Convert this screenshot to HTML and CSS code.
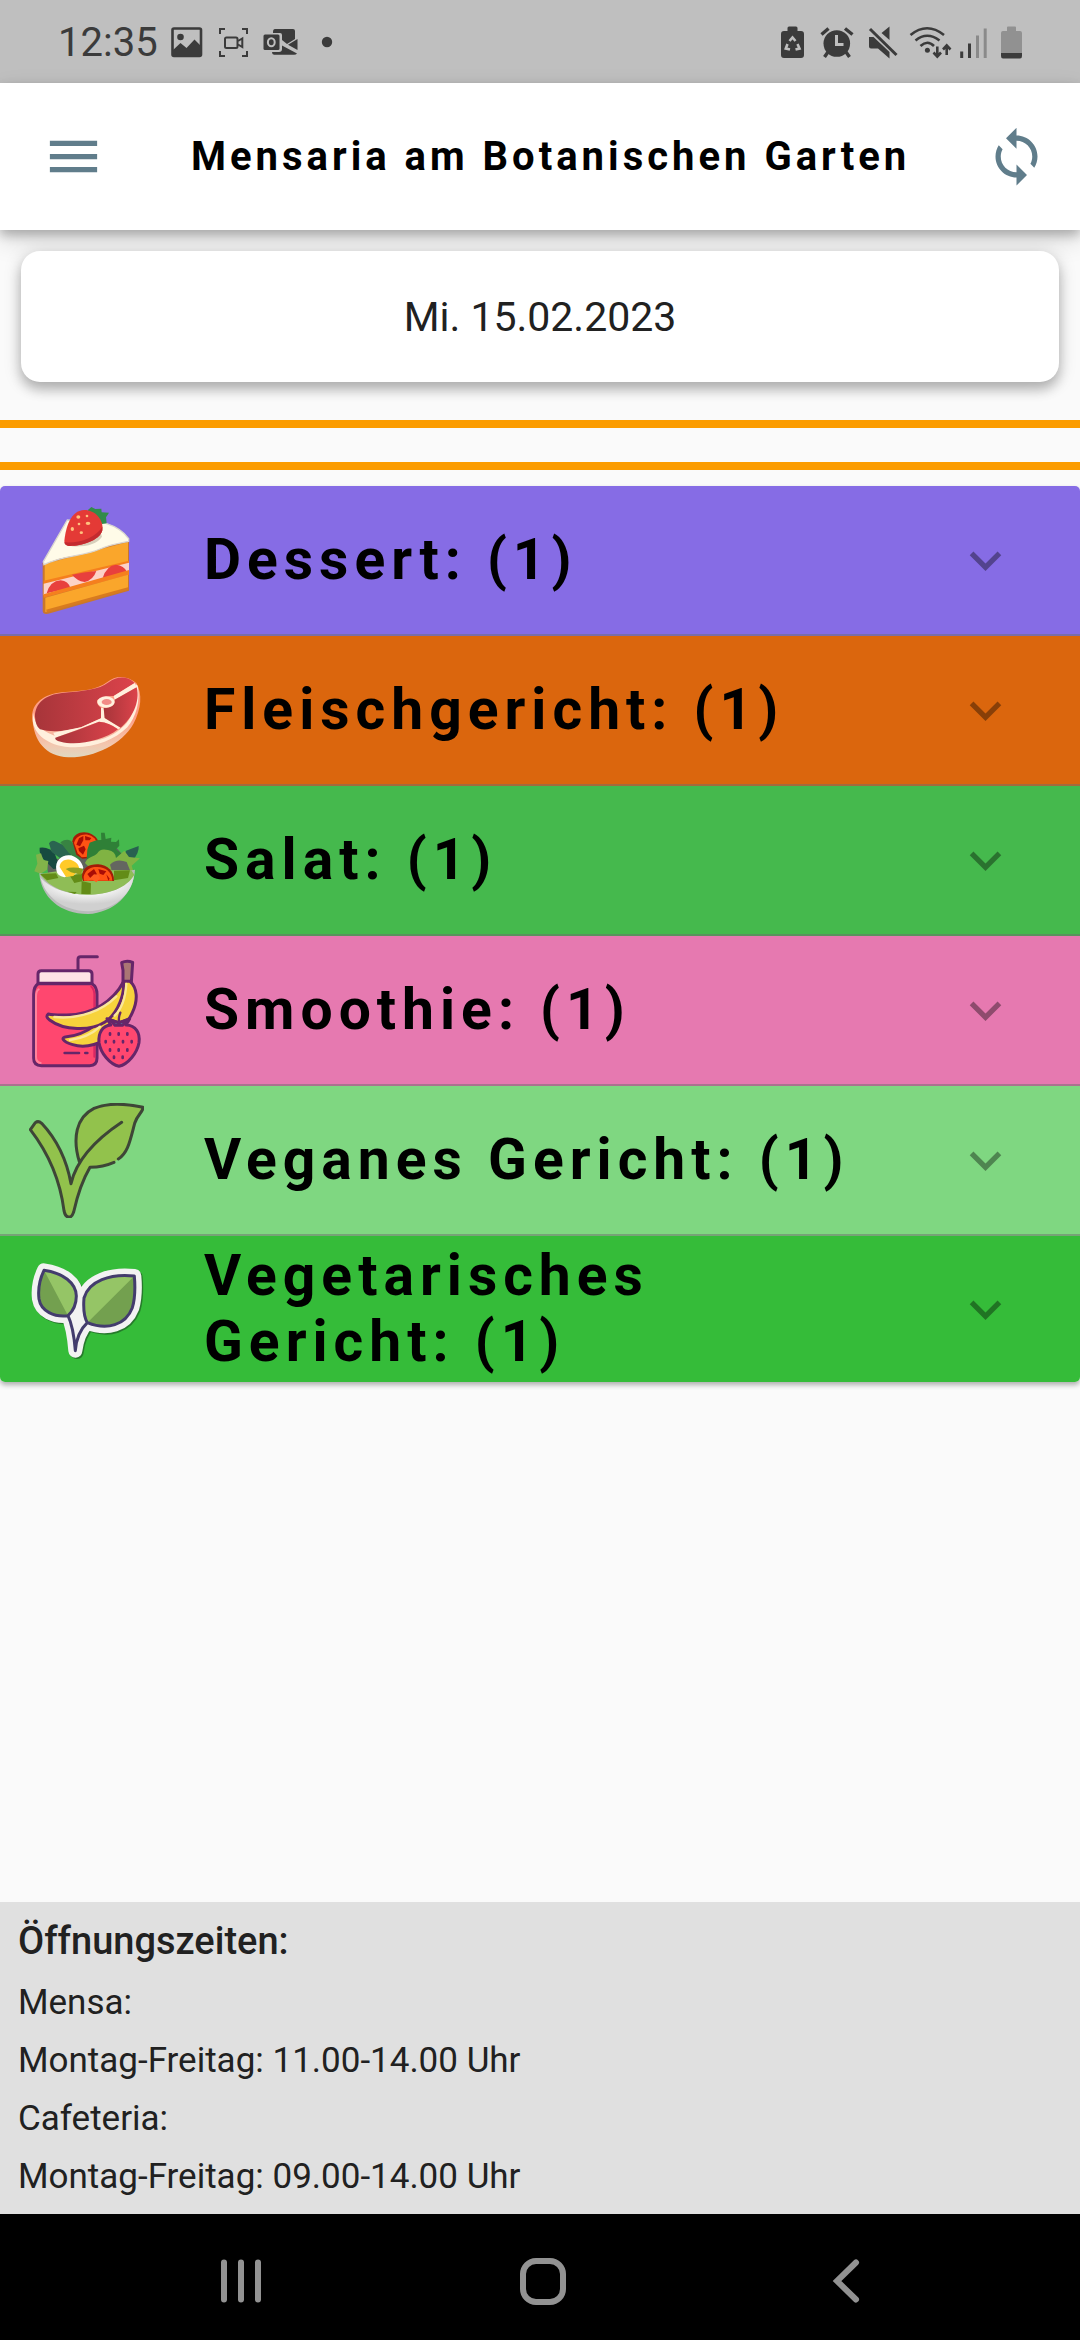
FILE: index.html
```html
<!DOCTYPE html>
<html lang="de">
<head>
<meta charset="utf-8">
<meta name="viewport" content="width=device-width, initial-scale=1">
<title>Mensaria am Botanischen Garten</title>
<link rel="stylesheet" href="styles.css">
</head>
<body>
<div class="status-bar">
  <div class="status-left">
    <span class="clock">12:35</span>
    <svg width="33" height="42" viewBox="170 20 33 42" aria-hidden="true">
      <rect x="172.500" y="27.500" width="28.500" height="27.500" rx="1.500" fill="none" stroke="#3b3b3b" stroke-width="2.600"/>
      <circle cx="180.500" cy="36" r="3.300" fill="#3b3b3b"/>
      <path d="M172 50L180.500 42L186.500 47L194.500 38.500L201 45V55H172Z" fill="#3b3b3b"/>
    </svg>
    <svg width="36" height="42" viewBox="215 20 36 42" fill="none" stroke="#3b3b3b" stroke-width="2" aria-hidden="true">
      <path d="M220 33V28H225M242 28H247V33M247 50V55H242M225 55H220V50"/>
      <rect x="225" y="36.500" width="12.500" height="10.500" rx="1.500"/>
      <path d="M238 40L242.300 37.500V46L238 43.500"/>
    </svg>
    <svg width="36" height="42" viewBox="263 20 36 42" aria-hidden="true">
      <path d="M273 31Q273 28 275 28H293Q295 28 295 30V38L287 43L282 39V34Q282 32 280 32H273Z" fill="#3b3b3b"/>
      <path d="M297.500 38V49L288 43.700ZM272 51H279Q282 51 282 48V44.500L297 52.500Q296 53.700 294 53.700H274Q272 53.700 272 51Z" fill="#3b3b3b"/>
      <rect x="263.500" y="33.500" width="16" height="15.500" rx="1.500" fill="#3b3b3b"/>
      <ellipse cx="271.300" cy="41.200" rx="3.400" ry="4" fill="none" stroke="#bfbfbf" stroke-width="2"/>
    </svg>
    <svg width="32" height="42" viewBox="311 20 32 42" aria-hidden="true"><circle cx="327" cy="41" r="5.200" fill="#3b3b3b"/></svg>
  </div>
  <div class="status-right">
    <svg width="34" height="42" viewBox="776 20 34 42" aria-hidden="true">
      <path d="M787.500 30V27Q787.500 25.500 789 25.500H796Q797.500 25.500 797.500 27V30H801Q804 30 804 33V54Q804 57 801 57H784Q781 57 781 54V33Q781 30 784 30Z" fill="#3b3b3b"/>
      <path d="M789.500 40L792.500 36.500L795.500 40M797.500 43L799.500 47.500L795.500 48.500M790 48.500L785.800 47.500L787.500 43" fill="none" stroke="#bfbfbf" stroke-width="2.600"/>
      <path d="M792.500 40L796.500 44L793.500 43.500V48.500H791.500V43.500L788.500 44Z" fill="#3b3b3b"/>
    </svg>
    <svg width="38" height="42" viewBox="818 20 38 42" fill="none" stroke="#3b3b3b" aria-hidden="true">
      <circle cx="836.800" cy="42.500" r="13.300" fill="#3b3b3b" stroke="none"/>
      <path d="M821.500 33.500L828.500 27.500M845 27.500L852.500 33.500M828 51L824.500 56M846 51L849.500 56" stroke-width="3.400"/>
      <path d="M836.500 34V43.500H843.500" stroke="#bfbfbf" stroke-width="3"/>
    </svg>
    <svg width="36" height="42" viewBox="864 20 36 42" aria-hidden="true">
      <path d="M869 36H873.500L889.500 51V57.500L878 47.500H871Q869 47.500 869 45.500ZM881.500 32L889.500 25.500V39Z" fill="#3b3b3b"/>
      <path d="M870 28L896.500 54" stroke="#3b3b3b" stroke-width="3"/>
    </svg>
    <svg width="44" height="42" viewBox="908 20 44 42" fill="none" stroke="#3b3b3b" stroke-width="2.600" aria-hidden="true">
      <path d="M910.500 34Q927 20.500 944 34M915.500 39.500Q927 30 939.500 39.500M920.500 45Q927.500 38.500 934 45"/>
      <circle cx="927.400" cy="49.300" r="2.500" fill="#3b3b3b" stroke="none"/>
      <path d="M937.300 45.500V55M933.500 51.500L937.300 55.500L941 51.500M946.700 54V45M943 48.500L946.700 44.500L950.500 48.500"/>
    </svg>
    <svg width="28" height="42" viewBox="960 20 28 42" stroke-width="3" aria-hidden="true">
      <path d="M961.700 50.500V57M969.500 42.500V57" stroke="#3b3b3b"/>
      <path d="M977.500 34.500V57M985.200 27.500V57" stroke="#8a8a8a"/>
    </svg>
    <svg width="30" height="42" viewBox="996 20 30 42" aria-hidden="true">
      <path d="M1007 30V26.500Q1007 25.500 1008 25.500H1015Q1016 25.500 1016 26.500V30H1020Q1022 30 1022 32V52H1001V32Q1001 30 1003 30Z" fill="#919191"/>
      <path d="M1001 52H1022V55Q1022 57.500 1020 57.500H1003Q1001 57.500 1001 55Z" fill="#3b3b3b"/>
    </svg>
  </div>
</div>

<header class="app-bar">
  <button class="icon-button" type="button" aria-label="Menü">
    <svg viewBox="0 0 24 24"><path d="M3 18h18v-2H3v2zm0-5h18v-2H3v2zm0-7v2h18V6H3z"/></svg>
  </button>
  <h1 class="app-title">Mensaria am Botanischen Garten</h1>
  <button class="icon-button" type="button" aria-label="Aktualisieren">
    <svg viewBox="0 0 24 24"><path d="M12 4V1L8 5l4 4V6c3.310 0 6 2.690 6 6 0 1.010-.250 1.970-.700 2.800l1.460 1.460C19.540 15.030 20 13.570 20 12c0-4.420-3.580-8-8-8zm0 14c-3.310 0-6-2.690-6-6 0-1.010.250-1.970.700-2.800L5.240 7.740C4.460 8.970 4 10.430 4 12c0 4.420 3.580 8 8 8v3l4-4-4-4v3z"/></svg>
  </button>
</header>

<main class="content">
  <button class="date-card" type="button">Mi. 15.02.2023</button>
  <div class="rules"></div>

  <div class="menu-list">
    <button class="menu-row dessert" type="button">
      <svg class="dish" viewBox="87 69 345 345" aria-hidden="true">
        <path d="M128 250L204 120Q330 110 387 176V332L150 400Q129 406 128 392Z" fill="#c9772d"/>
        <path d="M134 252L384 186V248L134 310Z" fill="#faa62b"/>
        <path d="M131 302L387 242V252L131 312Z" fill="#f57f1e"/>
        <path d="M131 311L387 248V275L131 346Z" fill="#fcd2c8"/>
        <path d="M140 340Q150 303 182 301Q205 303 211 324ZM216 284Q250 277 289 273Q280 300 254 306Q230 302 216 284ZM308 294Q320 256 348 254Q372 256 381 276Z" fill="#e8403d"/>
        <path d="M131 343L387 270V284L131 353Z" fill="#f57f1e"/>
        <path d="M136 353L384 284V326L136 396Z" fill="#faa62b"/>
        <path d="M138 389L384 322V330L142 397Z" fill="#d87b1f"/>
        <path d="M130 245L202 120L318 130Q365 145 386 176V184C360 190 330 194 300 207C250 230 190 224 132 254Z" fill="#fffbe8" stroke="#d9d5d0" stroke-width="4"/>
        <path d="M214 199Q285 202 306 170L302 158Z" fill="#d7d0bc"/>
        <path d="M263 91L274 81L286 87L304 86L305 97L327 98L318 112L320 130L306 132Z" fill="#328b4a"/>
        <path d="M193 183C197 144 211 91 253 90C285 90 312 119 307 151C299 184 238 199 207 198Q194 197 193 183Z" fill="#e43a36"/>
        <path d="M307 151C299 184 238 199 207 198Q194 197 193 187C240 190 286 174 307 140Z" fill="#c32b2f"/>
        <g fill="#ffc27e"><ellipse cx="235" cy="111" rx="6" ry="5"/><ellipse cx="261" cy="108" rx="4" ry="4"/><ellipse cx="264" cy="130" rx="7" ry="5"/><ellipse cx="237" cy="132" rx="4" ry="4"/><ellipse cx="217" cy="147" rx="5" ry="6"/><ellipse cx="244" cy="158" rx="5" ry="4"/></g>
      </svg>
      <span class="label">Dessert: (1)</span>
      <svg class="chevron" viewBox="0 0 24 24" aria-hidden="true"><path d="M16.590 8.590L12 13.170 7.410 8.590 6 10l6 6 6-6z"/></svg>
    </button>
    <button class="menu-row meat" type="button">
      <svg class="dish" viewBox="87 517 345 345" aria-hidden="true">
        <defs>
          <linearGradient id="fat" x1="0" y1="0" x2="0" y2="1"><stop offset=".5" stop-color="#ff9d84"/><stop offset=".85" stop-color="#f2c8b0"/><stop offset="1" stop-color="#dfd8c0"/></linearGradient>
          <linearGradient id="beef" x1="0" y1="0" x2="1" y2="0"><stop offset="0" stop-color="#a7353a"/><stop offset="1" stop-color="#dc434b"/></linearGradient>
        </defs>
        <path d="M97 710C94 669 132 640 186 635C245 631 292 628 321 605C350 581 382 586 409 607C428 640 424 685 400 730C365 792 280 832 205 830C137 828 100 781 97 710Z" fill="url(#fat)"/>
        <path d="M99 695Q105 740 145 757C230 800 319 785 362 744C396 720 413 670 407 610L413 615C422 660 408 710 382 740C340 782 270 807 195 798C134 790 99 754 98 716Z" fill="#fff0dd"/>
        <path d="M105 708C105 666 138 642 186 637C245 632 298 628 326 605C350 586 382 584 404 607L341 646Q310 644 291 659Q289 672 303 681L303 713L243 740Q168 760 120 746Q106 735 105 708Z" fill="url(#beef)"/>
        <path d="M303 681L311 682L314 712L362 741L354 746Q330 726 297 723L166 771L160 756L243 740L303 713ZM341 646L404 607L410 620L344 657Z" fill="#fff0dd"/>
        <path d="M344 657L410 620C422 665 394 716 362 741L314 712L311 682Q346 680 344 657Z" fill="url(#beef)"/>
        <path d="M166 771Q230 750 297 723Q330 726 354 746C309 781 230 796 182 783Q163 779 166 771Z" fill="url(#beef)"/>
        <ellipse cx="318" cy="664" rx="26" ry="17" fill="#fff0dd"/><ellipse cx="320" cy="664" rx="15" ry="9" fill="#f28b86"/>
      </svg>
      <span class="label">Fleischgericht: (1)</span>
      <svg class="chevron" viewBox="0 0 24 24" aria-hidden="true"><path d="M16.590 8.590L12 13.170 7.410 8.590 6 10l6 6 6-6z"/></svg>
    </button>
    <button class="menu-row salad" type="button">
      <svg class="dish" viewBox="87 65 345 345" aria-hidden="true">
        <defs><radialGradient id="bowl" cx=".5" cy=".2" r=".6"><stop offset=".5" stop-color="#f7f7f7"/><stop offset="1" stop-color="#d0d0d0"/></radialGradient></defs>
        <path d="M141 240L230 220L350 200L390 245L395 290H145Z" fill="#5e625d"/>
        <path d="M119 199Q148 195 165 219L180 260L160 263L129 232Q117 218 119 199Z" fill="#174a40"/>
        <path d="M147 186Q154 173 169 181L188 190L215 220L180 230L155 212Z" fill="#2a6550"/>
        <path d="M181 183Q207 166 220 188L243 220L239 242L206 214Z" fill="#388342"/>
        <path d="M378 208L416 194Q418 214 398 237L370 238Z" fill="#286150"/>
        <path d="M217 180C222 145 277 143 295 179L270 230L247 232L229 220Z" fill="#a51a07"/>
        <path d="M222 185C230 153 276 151 289 180L265 226L245 228L233 216Z" fill="#ff5314"/>
        <path d="M229 190L237 171L250 164L250 177L240 195ZM255 164L274 170L269 177L256 177ZM235 201L252 193L257 204L249 220L237 209Z" fill="#a90c06"/>
        <path d="M262 205L269 184L289 177L304 176L303 154L314 154L317 173L334 169L333 181L348 182L357 174L358 193L348 204L370 222L357 250L260 234Z" fill="#2f8037"/>
        <path d="M103 270L112 247L108 220L123 216L130 236L145 239L141 265L122 277Z" fill="#82b34a"/>
        <path d="M255 245C264 224 282 229 292 216Q300 200 324 206Q347 211 348 230L373 208L387 227L420 231L395 253L400 270L350 268L315 263L270 260Z" fill="#80b343"/>
        <path d="M330 250Q350 230 380 242L390 267H335Z" fill="#646660"/>
        <path d="M118 276L165 280L232 270L310 280L405 265C401 339 340 394 264 398C181 398 123 348 118 276Z" fill="#b9bbba"/>
        <path d="M122 290C155 325 210 340 265 340C325 339 373 323 402 282C394 344 338 388 264 390C186 388 135 344 122 290Z" fill="url(#bowl)"/>
        <path d="M121 280C155 266 210 270 254 266L394 267L403 280C381 319 326 340 260 340C200 339 148 318 121 280Z" fill="#8fbd56"/>
        <path d="M120 278L168 276L175 290L141 297ZM245 299L273 306L272 338L244 338ZM203 331L230 332L225 338ZM342 268L390 267L384 290L342 297ZM210 284L253 275L246 300L223 305Z" fill="#638c17"/>
        <path d="M169 266C164 238 185 221 207 222C228 223 246 240 250 260L239 275L193 288Q171 284 169 266Z" fill="#fff"/>
        <path d="M179 257C180 237 202 229 219 238Q236 246 238 262L220 284L198 287Z" fill="#ffca28"/>
        <path d="M197 263Q214 255 249 262L242 280L213 273Z" fill="#8d9f20"/>
        <path d="M246 287C246 258 268 248 295 249C323 252 343 269 342 299H249Z" fill="#a51a07"/>
        <path d="M251 286C257 263 273 256 293 257C316 257 336 272 337 298H252Z" fill="#ff5314"/>
        <path d="M262 278L282 263L291 279L273 293ZM295 263L319 270L310 281L299 277ZM319 279L329 292L325 298Z" fill="#a90c06"/>
        <path d="M260 300L282 279L296 280L300 291L289 303L275 294Z" fill="#ff5c21"/>
      </svg>
      <span class="label">Salat: (1)</span>
      <svg class="chevron" viewBox="0 0 24 24" aria-hidden="true"><path d="M16.590 8.590L12 13.170 7.410 8.590 6 10l6 6 6-6z"/></svg>
    </button>
    <button class="menu-row smoothie" type="button">
      <svg class="dish" viewBox="87 514 345 345" stroke="#662669" stroke-width="9" stroke-linejoin="round" stroke-linecap="round" aria-hidden="true">
        <path d="M234 566V533Q234 525 242 525H292" fill="none"/>
        <path d="M114 605V577Q114 567 124 567H266Q276 567 276 577V605Z" fill="#ffe3e5"/>
        <path d="M115 606H276Q291 615 291 638V830Q291 852 269 852H124Q101 852 101 830V638Q101 614 115 606Z" fill="#ff476f"/>
        <path d="M116 623Q108 627 108 646V825Q108 841 122 844" fill="none" stroke="#ff829b" stroke-width="6"/>
        <path d="M274 615Q284 625 283 644V825" fill="none" stroke="#d92763" stroke-width="6"/>
        <path d="M365 543Q380 535 398 542L394 602H369V566Z" fill="#aa7674"/>
        <path d="M372 599H390C412 618 415 655 397 693C365 765 275 807 218 789C187 780 181 767 200 765C263 760 318 710 338 673Z" fill="#f7d33c"/>
        <path d="M370 601C340 659 276 700 200 700Q160 701 145 697Q135 705 149 715C191 747 272 749 314 722C357 694 374 633 370 601Z" fill="#f7d33c"/>
        <path d="M163 706C240 714 308 686 349 644M210 775Q265 768 300 735M379 607Q375 672 344 702" fill="none" stroke="#fae798" stroke-width="7"/>
        <path d="M321 711L357 724L389 711L378 730C408 731 421 754 417 783C411 815 384 848 357 854C330 848 302 815 297 783C294 753 308 732 332 730Z" fill="#ff476f"/>
        <path d="M331 715L356 723L385 714L367 731H345Z" fill="#4d9db0"/>
        <path d="M358 727Q354 709 361 693" fill="none" stroke-width="7"/>
        <path d="M330 755v4M356 755v4M382 755v4M317 778v4M342 778v4M369 778v4M395 778v4M330 803v4M356 803v4M382 803v4M342 825v4M368 825v4M194 814h43M256 814h6" stroke-width="8" fill="none"/>
      </svg>
      <span class="label">Smoothie: (1)</span>
      <svg class="chevron" viewBox="0 0 24 24" aria-hidden="true"><path d="M16.590 8.590L12 13.170 7.410 8.590 6 10l6 6 6-6z"/></svg>
    </button>
    <button class="menu-row vegan" type="button">
      <svg class="dish" viewBox="87 64 345 345" aria-hidden="true">
        <path d="M238 240C217 170 228 107 282 80C320 64 378 66 429 77C430 90 413 97 404 125C390 177 384 214 355 232L342 242Q310 256 270 257C246 298 232 342 221 391Q215 408 207 406Q196 407 192 387C181 300 144 213 91 144L106 123Q115 116 125 125C169 172 200 235 213 301Q220 268 238 240Z" fill="#92c24c"/>
        <path d="M342 242Q310 256 270 257C246 298 232 342 221 391Q215 408 207 406Q196 407 192 387C181 300 144 213 91 144L106 123Q115 116 125 125C169 172 200 235 213 306C230 232 290 172 365 122M238 240C217 170 228 107 282 80C320 64 378 66 429 77C430 90 413 97 404 125C390 177 384 214 355 232" fill="none" stroke="#3e4637" stroke-width="9" stroke-linecap="round" stroke-linejoin="round"/>
      </svg>
      <span class="label">Veganes Gericht: (1)</span>
      <svg class="chevron" viewBox="0 0 24 24" aria-hidden="true"><path d="M16.590 8.590L12 13.170 7.410 8.590 6 10l6 6 6-6z"/></svg>
    </button>
    <button class="menu-row vegetarian" type="button">
      <svg class="dish" viewBox="87 512 345 345" stroke-linejoin="round" aria-hidden="true">
        <path d="M132 567C190 575 228 605 229 644Q229 680 204 703C163 708 123 690 117 653C113 620 119 594 132 567ZM403 584C331 576 266 599 252 650Q248 700 262 724C322 748 377 731 397 679Q408 642 403 584ZM204 703Q220 736 226 808Q233 754 262 724Z" fill="#267a2b" stroke="#267a2b" stroke-width="42" transform="translate(4 4)"/>
        <path d="M132 567C190 575 228 605 229 644Q229 680 204 703C163 708 123 690 117 653C113 620 119 594 132 567ZM403 584C331 576 266 599 252 650Q248 700 262 724C322 748 377 731 397 679Q408 642 403 584ZM204 703Q220 736 226 808Q233 754 262 724Z" fill="#f2f2f2" stroke="#f2f2f2" stroke-width="42"/>
        <path d="M204 703L240 630L262 724L226 800Z" fill="#f2f2f2"/>
        <path d="M132 567C190 575 228 605 229 644Q229 680 204 703C163 708 123 690 117 653C113 620 119 594 132 567ZM403 584C331 576 266 599 252 650Q248 700 262 724C322 748 377 731 397 679Q408 642 403 584Z" fill="#73a04f"/>
        <path d="M132 567C190 575 228 605 229 644Q229 680 204 703ZM403 584C331 576 266 599 252 650Q248 700 262 724Z" fill="#95c566"/>
        <path d="M132 567C190 575 228 605 229 644Q229 680 204 703C163 708 123 690 117 653C113 620 119 594 132 567ZM403 584C331 576 266 599 252 650Q248 700 262 724C322 748 377 731 397 679Q408 642 403 584ZM204 703Q220 736 226 808Q230 754 262 724" fill="none" stroke="#433c6d" stroke-width="9"/>
      </svg>
      <span class="label">Vegetarisches Gericht: (1)</span>
      <svg class="chevron" viewBox="0 0 24 24" aria-hidden="true"><path d="M16.590 8.590L12 13.170 7.410 8.590 6 10l6 6 6-6z"/></svg>
    </button>
  </div>
</main>

<footer class="hours">
  <h2>Öffnungszeiten:</h2>
  <p>Mensa:</p>
  <p>Montag-Freitag: 11.00-14.00 Uhr</p>
  <p>Cafeteria:</p>
  <p>Montag-Freitag: 09.00-14.00 Uhr</p>
</footer>

<nav class="system-nav">
  <button type="button" aria-label="Letzte Apps"><svg viewBox="0 0 48 48"><path d="M7 5.500V42.500M24 5.500V42.500M41 5.500V42.500"/></svg></button>
  <button type="button" aria-label="Startseite"><svg viewBox="0 0 48 48"><rect x="4" y="4" width="40" height="41" rx="13"/></svg></button>
  <button type="button" aria-label="Zurück"><svg viewBox="0 0 48 48"><path d="M34 5.500L15 24L34 42.500"/></svg></button>
</nav>
</body>
</html>
```

FILE: styles.css
```css
* { box-sizing: border-box; }

body {
  margin: 0;
  min-height: 100vh;
  display: flex;
  flex-direction: column;
  background: #fafafa;
  color: #212121;
  font-family: Roboto, "Noto Sans", sans-serif;
}

h1, h2, p { margin: 0; }
svg { display: block; flex: none; }

button {
  margin: 0;
  padding: 0;
  border: 0;
  background: none;
  color: inherit;
  font: inherit;
  cursor: pointer;
}

/* Status bar */
.status-bar {
  height: 83px;
  padding: 0 54px 0 58px;
  display: flex;
  justify-content: space-between;
  align-items: center;
  background: #bfbfbf;
}
.status-left, .status-right { display: flex; align-items: center; }
.status-left { gap: 12px; }
.status-right { gap: 8px; }
.clock { padding-top: 3px; color: #3b3b3b; font-size: 40px; line-height: 48px; }

/* App bar */
.app-bar {
  height: 147px;
  padding: 0 32px 0 42px;
  display: flex;
  align-items: center;
  background: #fff;
  box-shadow: 0 5px 10px rgba(0, 0, 0, .24), 0 10px 24px rgba(0, 0, 0, .14);
}
.icon-button svg { width: 63px; height: 63px; fill: #607d8b; }
.app-title {
  flex: 1;
  padding-left: 86px;
  color: #000;
  font-size: 40px;
  line-height: 48px;
  font-weight: 700;
  letter-spacing: 4px;
  white-space: nowrap;
}

/* Content */
.content { flex: 1; padding-top: 21px; display: flex; flex-direction: column; }
.date-card {
  height: 131px;
  margin: 0 21px;
  border-radius: 19px;
  background: #fff;
  font-size: 41px;
  box-shadow: 0 8px 12px rgba(0, 0, 0, .2), 0 3px 18px rgba(0, 0, 0, .18);
}
.rules {
  height: 50px;
  margin: 38px 0 16px;
  border: solid #fb9c00;
  border-width: 8px 0;
}

.menu-list {
  border-radius: 5px;
  overflow: hidden;
  box-shadow: 0 3px 5px rgba(0, 0, 0, .3);
}
.menu-row {
  width: 100%;
  min-height: 150px;
  padding: 0 63px 0 29px;
  display: flex;
  align-items: center;
  border-bottom: 2px solid rgba(110, 110, 110, .5);
  color: #000;
  text-align: left;
}
.menu-row:last-child { min-height: 146px; border-bottom: 0; }
.dish { width: 115px; height: 115px; }
.label {
  flex: 1;
  margin: 0 60px;
  font-size: 57px;
  line-height: 66px;
  font-weight: 700;
  letter-spacing: 6px;
}
.chevron { width: 63px; height: 63px; fill: rgba(0, 0, 0, .38); }

.dessert { background: #866ce5; }
.meat { background: #db660d; }
.salad { background: #45b94d; }
.smoothie { background: #e679b0; }
.vegan { background: #7fd781; }
.vegetarian { background: #35bc39; }

/* Opening hours */
.hours {
  padding: 10px 18px 8px;
  background: #e0e0e0;
  font-size: 35px;
  line-height: 58px;
}
.hours h2 { margin-bottom: 4px; font-size: 38px; font-weight: 500; }

/* System navigation */
.system-nav {
  height: 126px;
  padding: 7px 83px 0 90px;
  display: grid;
  grid-template-columns: repeat(3, 1fr);
  place-items: center;
  background: #000;
}
.system-nav svg {
  width: 48px;
  height: 48px;
  fill: none;
  stroke: #929292;
  stroke-width: 6;
  stroke-linecap: round;
}
```
